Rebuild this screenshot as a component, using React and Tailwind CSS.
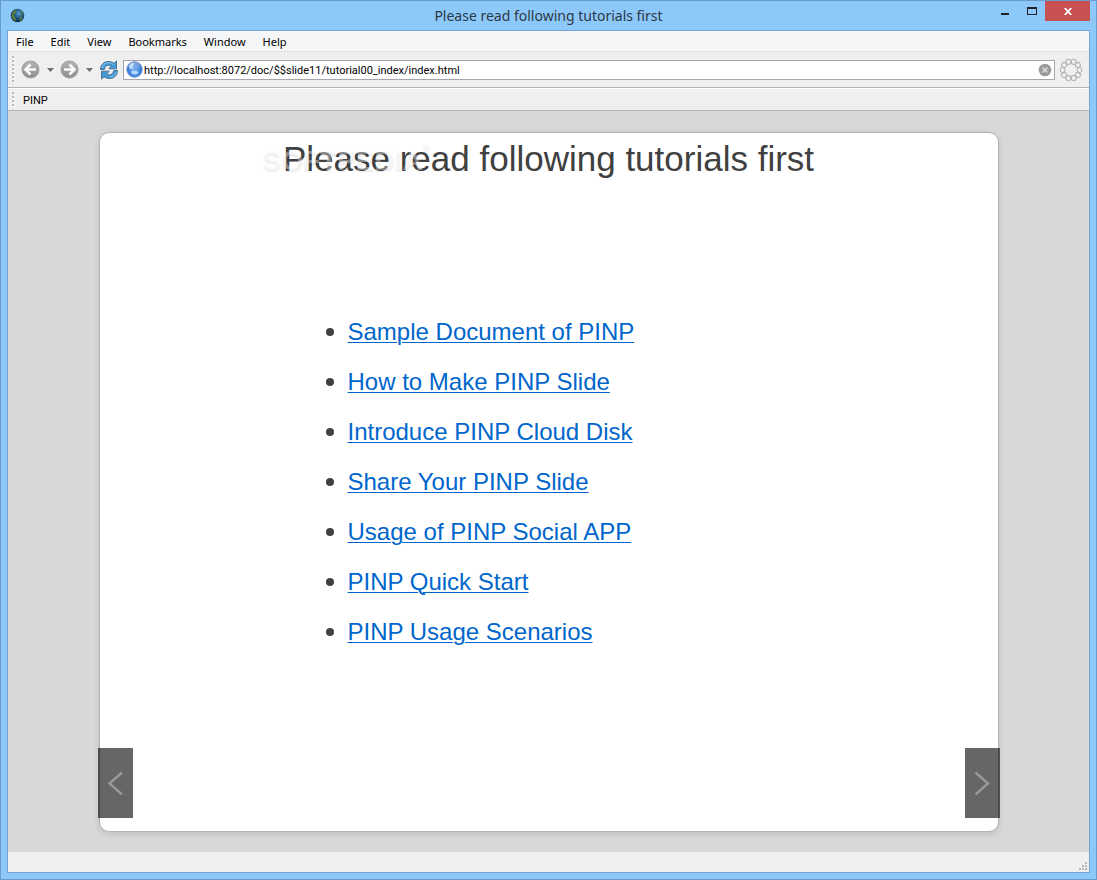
import { useState } from 'react';

const menus = ['File', 'Edit', 'View', 'Bookmarks', 'Window', 'Help'];

const tutorials = [
  'Sample Document of PINP',
  'How to Make PINP Slide',
  'Introduce PINP Cloud Disk',
  'Share Your PINP Slide',
  'Usage of PINP Social APP',
  'PINP Quick Start',
  'PINP Usage Scenarios',
];

function AppIcon() {
  return (
    <svg className="h-4 w-4" viewBox="0 0 16 16" aria-hidden="true">
      <defs>
        <radialGradient id="earth" cx="0.6" cy="0.35" r="0.7">
          <stop offset="0" stopColor="#5a9cd0" />
          <stop offset="0.5" stopColor="#1f5482" />
          <stop offset="1" stopColor="#0d2237" />
        </radialGradient>
      </defs>
      <circle cx="7.5" cy="7.5" r="6.8" fill="url(#earth)" />
      <path d="M2 5 4 2.5 6.5 1.5 6 4 4.5 6 4 8.5 6 10 5.5 13 3.5 12 1.5 9z" fill="#5b7a3c" />
      <path d="M10 3 11.5 3 13.5 6 12.5 7 11 6zM9.5 9 12 9 12.5 11 10 13.5z" fill="#4f7545" />
    </svg>
  );
}

function NavArrow({ forward }) {
  return (
    <svg className="h-[19px] w-[19px]" viewBox="0 0 19 19" aria-hidden="true">
      <defs>
        <linearGradient id="disc" x1="0" y1="0" x2="0" y2="1">
          <stop offset="0" stopColor="#b5b5b5" />
          <stop offset="1" stopColor="#8d8d8d" />
        </linearGradient>
      </defs>
      <circle cx="9.5" cy="9.5" r="8.5" fill="url(#disc)" stroke="#9b9b9b" />
      <path
        d={forward ? 'M4 9.5H14M9.5 4.5 14.5 9.5 9.5 14.5' : 'M15 9.5H5M9.5 4.5 4.5 9.5 9.5 14.5'}
        fill="none"
        stroke="#fafafa"
        strokeWidth="2.6"
      />
    </svg>
  );
}

function Caret() {
  return (
    <svg className="h-1 w-[7px]" viewBox="0 0 7 4" aria-hidden="true">
      <path d="M0 0H7L3.5 4z" fill="#6e6e72" />
    </svg>
  );
}

function ReloadIcon() {
  return (
    <svg className="h-5 w-5" viewBox="0 0 20 20" aria-hidden="true">
      <g fill="#439ad8" stroke="#4a7390" strokeWidth="1" strokeLinejoin="round">
        <path d="M1.5 9.5C1.5 4.5 5 1.5 9.5 1.5 11.8 1.5 13.8 2.3 15 3.3L17.5 1V8.8H9.8L12.3 6.1C11.5 5.5 10.5 5.2 9.5 5.2 7.3 5.2 5.6 6.8 5.4 9.5z" />
        <path d="M18.5 10.5C18.5 15.5 15 18.5 10.5 18.5 8.2 18.5 6.2 17.7 5 16.7L2.5 19V11.2H10.2L7.7 13.9C8.5 14.5 9.5 14.8 10.5 14.8 12.7 14.8 14.4 13.2 14.6 10.5z" />
      </g>
      <path d="M3 8C3.5 4.7 6 2.9 9.5 2.9 12 2.9 13.8 3.8 15 4.8" fill="none" stroke="#83c8f2" />
      <path d="M17.3 12C16.6 15.3 14 17 10.8 17" fill="none" stroke="#83c8f2" />
    </svg>
  );
}

function GlobeIcon() {
  return (
    <svg className="h-[17px] w-[17px] shrink-0" viewBox="0 0 17 17" aria-hidden="true">
      <defs>
        <radialGradient id="globe" cx="0.5" cy="0.6" r="0.6">
          <stop offset="0" stopColor="#72b0f5" />
          <stop offset="0.7" stopColor="#357bd8" />
          <stop offset="1" stopColor="#2458ad" />
        </radialGradient>
        <linearGradient id="shine" x1="0" y1="0" x2="0" y2="1">
          <stop offset="0" stopColor="#fff" stopOpacity="0.45" />
          <stop offset="1" stopColor="#fff" stopOpacity="0.05" />
        </linearGradient>
      </defs>
      <circle cx="8.5" cy="8.5" r="7.7" fill="url(#globe)" stroke="#6490cf" />
      <path d="M3 4.5 6 2 8.5 2.5 7 4.5 7.5 7 5.5 8.5 3 7z" fill="#a9cdf8" />
      <path d="M5 10.5 8 9.5 12 10.5 12.5 12 10 13.5 6 13z" fill="#b5d6fb" />
      <ellipse cx="8.5" cy="5.5" rx="6" ry="4.3" fill="url(#shine)" />
    </svg>
  );
}

function ThrobberIcon() {
  const dots = [0, 1, 2, 3, 4, 5, 6, 7, 8, 9];
  return (
    <svg className="h-6 w-6" viewBox="0 0 24 24" fill="none" stroke="#b0b0b0" aria-hidden="true">
      {dots.map((n) => (
        <circle key={n} cx="20.5" cy="12" r="2.5" transform={`rotate(${n * 36} 12 12)`} />
      ))}
    </svg>
  );
}

function Grip({ className }) {
  return (
    <svg className={className} aria-hidden="true">
      <defs>
        <pattern id="grip" width="3" height="4" patternUnits="userSpaceOnUse">
          <rect width="2" height="2" fill="#b8b8b8" />
          <rect x="1" y="2" width="2" height="1" fill="#fff" />
        </pattern>
      </defs>
      <rect width="100%" height="100%" fill="url(#grip)" />
    </svg>
  );
}

function TitleBar() {
  return (
    <header className="relative flex h-[29px] items-center justify-between pl-[9px]">
      <AppIcon />
      <h1 className="absolute inset-x-0 text-center font-['Noto_Sans',sans-serif] text-sm text-[#2b3945] pointer-events-none">
        Please read following tutorials first
      </h1>
      <div className="flex self-start pr-[6px]">
        <button aria-label="Minimize" className="flex h-5 w-7 justify-center">
          <span className="mt-3 h-[2px] w-2 bg-[#222]" />
        </button>
        <button aria-label="Maximize" className="flex h-5 w-[26px] justify-center">
          <span className="mt-[6px] h-2 w-[10px] border border-t-2 border-[#222]" />
        </button>
        <button aria-label="Close" className="flex h-5 w-[45px] items-center justify-center bg-[#c75050]">
          <svg className="h-[7px] w-2" viewBox="0 0 8 7" aria-hidden="true">
            <path d="M.7 0 7.3 7M7.3 0 .7 7" stroke="#fff" strokeWidth="1.8" />
          </svg>
        </button>
      </div>
    </header>
  );
}

function Toolbar() {
  const [url, setUrl] = useState('http://localhost:8072/doc/$$slide11/tutorial00_index/index.html');

  return (
    <div className="flex h-9 items-center border-b border-[#b4b4b4] bg-[#efefef] pl-1 pr-[6px]">
      <Grip className="h-7 w-[3px]" />
      <button aria-label="Back" className="ml-[6px]">
        <NavArrow />
      </button>
      <button aria-label="Back history" className="ml-[7px] flex h-5 items-center">
        <Caret />
      </button>
      <button aria-label="Forward" className="ml-[6px]">
        <NavArrow forward />
      </button>
      <button aria-label="Forward history" className="ml-[7px] flex h-5 items-center">
        <Caret />
      </button>
      <button aria-label="Reload" className="ml-[6px]">
        <ReloadIcon />
      </button>
      <div className="ml-1 flex h-5 flex-1 items-center border border-[#a5a5ab] bg-white pl-[2px] pr-[2px]">
        <GlobeIcon />
        <input
          aria-label="Address"
          value={url}
          onChange={(e) => setUrl(e.target.value)}
          className="ml-px min-w-0 flex-1 pt-[2px] font-[Roboto,sans-serif] text-[11px] leading-4 text-black outline-none"
        />
        <button aria-label="Clear address" onClick={() => setUrl('')}>
          <svg className="h-[14px] w-[14px]" viewBox="0 0 14 14" aria-hidden="true">
            <circle cx="7" cy="7" r="6.3" fill="#9a9a9a" />
            <path d="M4.5 4.5 9.5 9.5M9.5 4.5 4.5 9.5" stroke="#ddd" strokeWidth="1.5" />
          </svg>
        </button>
      </div>
      <div className="ml-1">
        <ThrobberIcon />
      </div>
    </div>
  );
}

function Slide() {
  return (
    <section className="relative h-[700px] w-[900px] max-w-full rounded-[10px] border border-[#b2b2b2] bg-white font-['Liberation_Sans',Arial,sans-serif] text-[#404040] shadow-[0_2px_6px_rgba(0,0,0,0.12)]">
      <h2 className="pt-1 text-center text-[35px] leading-[44px]">Please read following tutorials first</h2>
      <span
        aria-hidden="true"
        className="pointer-events-none absolute left-[163px] top-[7px] flex text-[28px] font-bold leading-[42px] text-white/40 [text-shadow:0_2px_2px_rgba(0,0,0,0.08)]"
      >
        SOFTPEDIA
        <sup className="text-[10px] leading-[26px]">®</sup>
      </span>

      <ul className="ml-[248px] mt-[126px] text-2xl leading-[50px]">
        {tutorials.map((title) => (
          <li key={title} className="relative">
            <span className="absolute -left-[22px] top-[21px] h-2 w-2 rounded-full bg-[#404040]" />
            <a href="#" className="text-[#0066cc] underline decoration-1 underline-offset-2">
              {title}
            </a>
          </li>
        ))}
      </ul>

      <button
        aria-label="Previous slide"
        className="absolute -left-[2px] bottom-[13px] flex h-[70px] w-[35px] items-center justify-center bg-black/60"
      >
        <svg className="h-6 w-4" viewBox="0 0 16 24" fill="none" aria-hidden="true">
          <path d="M15 1.5 2.5 12.5 15 23.5" stroke="#999" strokeWidth="2.4" />
        </svg>
      </button>
      <button
        aria-label="Next slide"
        className="absolute -right-[2px] bottom-[13px] flex h-[70px] w-[35px] items-center justify-center bg-black/60"
      >
        <svg className="h-6 w-4" viewBox="0 0 16 24" fill="none" aria-hidden="true">
          <path d="M1.5 1.5 14 12.5 1.5 23.5" stroke="#999" strokeWidth="2.4" />
        </svg>
      </button>
    </section>
  );
}

export default function App() {
  return (
    <div className="flex min-h-screen flex-col border border-[#6b9bc8] bg-[#8dc8fb]">
      <TitleBar />

      <div className="mx-[6px] mb-[6px] flex flex-1 flex-col border border-[#75a5d0] bg-[#efefef]">
        <nav className="flex h-[21px] items-center gap-[17px] border-b border-[#e3e5e8] bg-[#f5f6f7] px-2 pt-[2px] font-['Noto_Sans',sans-serif] text-[11px] text-black">
          {menus.map((menu) => (
            <button key={menu}>{menu}</button>
          ))}
        </nav>

        <Toolbar />

        {/* Bookmarks bar */}
        <div className="flex h-[23px] items-center border-b border-t border-b-[#b4b4b4] border-t-white bg-[#efefef] pl-1">
          <Grip className="h-4 w-[3px]" />
          <button className="ml-2 pt-[2px] font-[Roboto,sans-serif] text-[11px] leading-4 text-black">PINP</button>
        </div>

        <main className="flex flex-1 items-start justify-center bg-[#d8d8d8] pb-5 pt-[21px]">
          <Slide />
        </main>

        {/* Status bar */}
        <footer className="flex h-5 items-end justify-end bg-[#efefef] p-[2px]">
          <svg className="h-2 w-2" viewBox="0 0 8 8" fill="#b8b8b8" aria-hidden="true">
            <path d="M6 0h2v2H6zM3 3h2v2H3zM6 3h2v2H6zM0 6h2v2H0zM3 6h2v2H3zM6 6h2v2H6z" />
          </svg>
        </footer>
      </div>
    </div>
  );
}
